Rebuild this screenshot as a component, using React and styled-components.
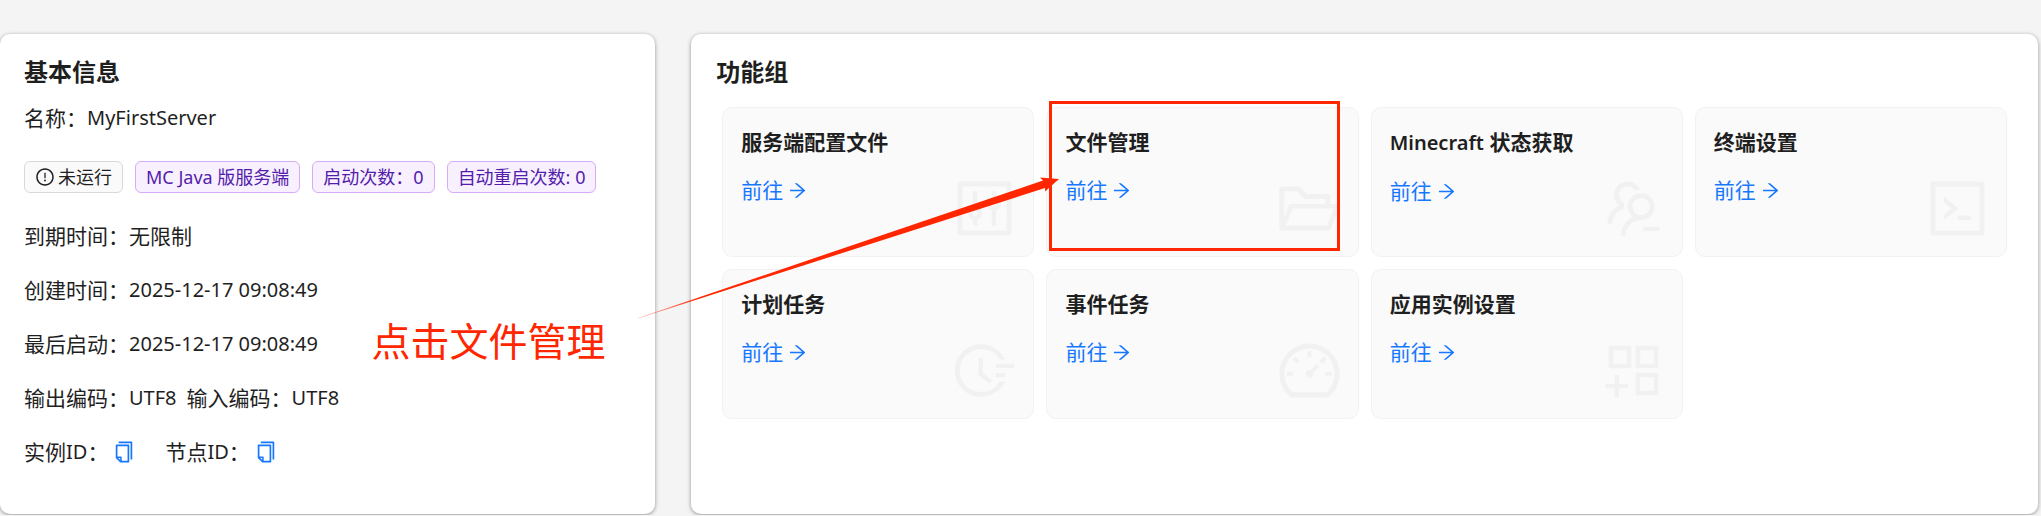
import React from "react";
import styled, { createGlobalStyle } from "styled-components";
import {
  AiOutlineAppstoreAdd,
  AiOutlineArrowRight,
  AiOutlineCode,
  AiOutlineControl,
  AiOutlineCopy,
  AiOutlineDashboard,
  AiOutlineExclamationCircle,
  AiOutlineFieldTime,
  AiOutlineFolderOpen,
  AiOutlineUsergroupDelete,
} from "react-icons/ai";

const GlobalStyle = createGlobalStyle`
  * { box-sizing: border-box; }
  body {
    margin: 0;
    background: #f4f4f4;
    color: #1f1f1f;
    font-family: "Noto Sans", "Noto Sans CJK SC", sans-serif;
    font-size: 21px;
    line-height: 32px;
  }
`;

const Page = styled.main`
  display: grid;
  grid-template-columns: repeat(3, minmax(0, 1fr));
  gap: 36px;
  padding: 34px 3px 1px 0;
`;

const Panel = styled.section`
  grid-column: span ${(p) => p.$span};
  padding: 20px ${(p) => p.$side}px 46px;
  background: #fff;
  border-radius: 10px;
  box-shadow: 0 1px 4px rgba(0, 0, 0, 0.4);
`;

const PanelTitle = styled.h2`
  margin: 0;
  font-size: 24px;
  line-height: 36px;
  font-weight: 700;
`;

const InfoList = styled.div`
  display: flex;
  flex-direction: column;
  gap: 22px;
  margin-top: 12px;
`;

const InfoRow = styled.div`
  display: flex;
  align-items: center;
  white-space: pre;
`;

const InfoPair = styled.span`
  display: inline-flex;
  align-items: center;
  margin-right: 10px;
`;

const Latin = styled.span`
  font-size: 20px;
`;

const TagRow = styled.div`
  display: flex;
  gap: 12px;
  margin: 5px 0;
`;

const tones = {
  neutral: { bg: "#fafafa", border: "#d9d9d9", text: "#1f1f1f" },
  purple: { bg: "#f9f0ff", border: "#d3adf7", text: "#531dab" },
};

const Tag = styled.span`
  display: inline-flex;
  align-items: center;
  gap: 3px;
  height: 32px;
  padding: 0 10px;
  border: 1px solid ${(p) => tones[p.$tone].border};
  border-radius: 6px;
  background: ${(p) => tones[p.$tone].bg};
  color: ${(p) => tones[p.$tone].text};
  font-size: 18px;
  line-height: 30px;
  white-space: pre;

  svg {
    width: 20px;
    height: 20px;
  }
`;

const CopyButton = styled.button`
  display: inline-flex;
  margin: 0 29px 0 4px;
  padding: 0;
  border: 0;
  background: none;
  color: #1677ff;
  font-size: 24px;
  cursor: pointer;
`;

const FeatureGrid = styled.div`
  display: grid;
  grid-template-columns: repeat(4, minmax(0, 1fr));
  gap: 12px;
  margin: 17px 6px 0;
`;

const Feature = styled.article`
  position: relative;
  display: flex;
  justify-content: space-between;
  height: 150px;
  padding: 18px 14px 13px 18px;
  border: 1px solid #f2f2f2;
  border-radius: 10px;
  background: #fafafa;
`;

const FeatureText = styled.div`
  display: flex;
  flex-direction: column;
  align-items: flex-start;
  gap: 16px;
  white-space: nowrap;
`;

const FeatureTitle = styled.h3`
  margin: 0;
  font-size: 21px;
  line-height: 32px;
  font-weight: 600;
`;

const GoLink = styled.a`
  display: inline-flex;
  align-items: center;
  gap: 4px;
  color: #1677ff;
  text-decoration: none;
`;

const FeatureIcon = styled.span`
  display: flex;
  align-self: flex-end;
  color: #f1f1f1;
  font-size: 69px;
`;

const Highlight = styled.div`
  position: absolute;
  inset: -7px 18px 5px 2px;
  border: 3px solid #ff2600;
  pointer-events: none;
`;

const Callout = styled.div`
  position: absolute;
  z-index: 1;
  top: 69px;
  right: calc(100% - 12px);
  display: flex;
  align-items: flex-end;
  gap: 33px;
  color: #ff2600;
  font-size: 39px;
  line-height: 44px;
  white-space: nowrap;
  pointer-events: none;

  svg {
    flex: none;
    margin-bottom: 42px;
  }
`;

const features = [
  { title: "服务端配置文件", Icon: AiOutlineControl },
  { title: "文件管理", Icon: AiOutlineFolderOpen, highlighted: true },
  { latin: "Minecraft", title: " 状态获取", Icon: AiOutlineUsergroupDelete },
  { title: "终端设置", Icon: AiOutlineCode },
  { title: "计划任务", Icon: AiOutlineFieldTime },
  { title: "事件任务", Icon: AiOutlineDashboard },
  { title: "应用实例设置", Icon: AiOutlineAppstoreAdd },
];

function ArrowDrawing() {
  return (
    <svg width="421" height="144" viewBox="0 0 421 144" aria-hidden="true">
      <defs>
        <linearGradient id="tail" x1="0" x2="1" y1="0" y2="0">
          <stop offset="0" stopColor="#ff2600" stopOpacity="0.3" />
          <stop offset="0.15" stopColor="#ff2600" />
        </linearGradient>
      </defs>
      <path d="M0 141 L405 3.5 L402 0.5 L421 2 L407 14.5 L407 11 L0 141.5 Z" fill="url(#tail)" />
    </svg>
  );
}

export default function App() {
  return (
    <>
      <GlobalStyle />
      <Page>
        <Panel $span={1} $side={24}>
          <PanelTitle>基本信息</PanelTitle>
          <InfoList>
            <InfoRow>
              名称：<Latin>MyFirstServer</Latin>
            </InfoRow>
            <TagRow>
              <Tag $tone="neutral">
                <AiOutlineExclamationCircle />
                未运行
              </Tag>
              <Tag $tone="purple">MC Java 版服务端</Tag>
              <Tag $tone="purple">启动次数：0</Tag>
              <Tag $tone="purple">自动重启次数: 0</Tag>
            </TagRow>
            <InfoRow>到期时间：无限制</InfoRow>
            <InfoRow>
              创建时间：<Latin>2025-12-17 09:08:49</Latin>
            </InfoRow>
            <InfoRow>
              最后启动：<Latin>2025-12-17 09:08:49</Latin>
            </InfoRow>
            <InfoRow>
              <InfoPair>
                输出编码：<Latin>UTF8</Latin>
              </InfoPair>
              <InfoPair>
                输入编码：<Latin>UTF8</Latin>
              </InfoPair>
            </InfoRow>
            <InfoRow>
              实例<Latin>ID</Latin>：
              <CopyButton type="button" aria-label="复制实例ID">
                <AiOutlineCopy />
              </CopyButton>
              节点<Latin>ID</Latin>：
              <CopyButton type="button" aria-label="复制节点ID">
                <AiOutlineCopy />
              </CopyButton>
            </InfoRow>
          </InfoList>
        </Panel>

        <Panel $span={2} $side={25}>
          <PanelTitle>功能组</PanelTitle>
          <FeatureGrid>
            {features.map(({ title, latin, Icon, highlighted }) => (
              <Feature key={title}>
                <FeatureText>
                  <FeatureTitle>
                    {latin && <Latin>{latin}</Latin>}
                    {title}
                  </FeatureTitle>
                  <GoLink href="#">
                    前往
                    <AiOutlineArrowRight />
                  </GoLink>
                </FeatureText>
                <FeatureIcon>
                  <Icon />
                </FeatureIcon>
                {highlighted && (
                  <>
                    <Highlight />
                    <Callout>
                      点击文件管理
                      <ArrowDrawing />
                    </Callout>
                  </>
                )}
              </Feature>
            ))}
          </FeatureGrid>
        </Panel>
      </Page>
    </>
  );
}
